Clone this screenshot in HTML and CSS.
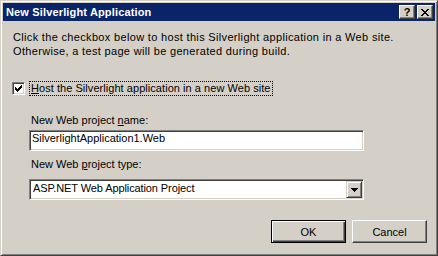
FILE: index.html
```html
<!DOCTYPE html>
<html lang="en">
<head>
  <meta charset="UTF-8" />
  <title>New Silverlight Application</title>
  <link rel="stylesheet" href="styles.css">
</head>
<body>

<div class="ventana">
  <div class="barra_titulo">
    <span class="titulo">New Silverlight Application</span>
    <div class="botones_titulo">
      <span class="boton_titulo ayuda">?</span>
      <span class="boton_titulo">
        <svg width="8" height="7" viewBox="0 0 8 7" shape-rendering="crispEdges">
          <rect x="0" y="0" width="2" height="1"/><rect x="6" y="0" width="2" height="1"/>
          <rect x="1" y="1" width="2" height="1"/><rect x="5" y="1" width="2" height="1"/>
          <rect x="2" y="2" width="4" height="1"/>
          <rect x="3" y="3" width="2" height="1"/>
          <rect x="2" y="4" width="4" height="1"/>
          <rect x="1" y="5" width="2" height="1"/><rect x="5" y="5" width="2" height="1"/>
          <rect x="0" y="6" width="2" height="1"/><rect x="6" y="6" width="2" height="1"/>
        </svg>
      </span>
    </div>
  </div>

  <div class="contenido">
    <p class="intro">Click the checkbox below to host this Silverlight application in a Web site.<br>Otherwise, a test page will be generated during build.</p>

    <label class="fila_check">
      <span class="casilla">
        <svg width="7" height="7" viewBox="0 0 7 7" shape-rendering="crispEdges">
          <rect x="6" y="0" width="1" height="1"/>
          <rect x="5" y="1" width="2" height="1"/>
          <rect x="0" y="2" width="1" height="1"/><rect x="4" y="2" width="3" height="1"/>
          <rect x="0" y="3" width="2" height="1"/><rect x="3" y="3" width="3" height="1"/>
          <rect x="0" y="4" width="5" height="1"/>
          <rect x="1" y="5" width="3" height="1"/>
          <rect x="2" y="6" width="1" height="1"/>
        </svg>
      </span>
      <span class="foco"><u>H</u>ost the Silverlight application in a new Web site</span>
    </label>

    <div class="campo">
      <div class="etiqueta">New Web project <u>n</u>ame:</div>
      <div class="caja_texto">SilverlightApplication1.Web</div>
    </div>

    <div class="campo campo_tipo">
      <div class="etiqueta">New Web <u>p</u>roject type:</div>
      <div class="combo">
        <span class="combo_valor">ASP.NET Web Application Project</span>
        <span class="combo_boton">
          <svg width="7" height="4" viewBox="0 0 7 4" shape-rendering="crispEdges">
            <rect x="0" y="0" width="7" height="1"/>
            <rect x="1" y="1" width="5" height="1"/>
            <rect x="2" y="2" width="3" height="1"/>
            <rect x="3" y="3" width="1" height="1"/>
          </svg>
        </span>
      </div>
    </div>

    <div class="botonera">
      <button class="boton por_defecto">OK</button>
      <button class="boton">Cancel</button>
    </div>
  </div>
</div>

</body>
</html>
```

FILE: styles.css
```css
html, body {
  margin: 0;
  padding: 0;
  background: #d4d0c8;
}

.ventana {
  width: 438px;
  height: 256px;
  box-sizing: border-box;
  background: #d4d0c8;
  border: 1px solid;
  border-color: #d4d0c8 #404040 #404040 #d4d0c8;
  box-shadow: inset 1px 1px #ffffff, inset -1px -1px #808080;
  padding: 2px;
  display: flex;
  flex-direction: column;
  font-family: 'Liberation Sans', Arial, sans-serif;
  font-size: 11px;
  line-height: 13px;
  color: #000;
}

.barra_titulo {
  height: 18px;
  background: #0a246a;
  display: flex;
  align-items: center;
  justify-content: space-between;
  padding: 0 2px 0 3px;
}

.titulo {
  color: #fff;
  font-weight: bold;
  font-size: 11px;
  letter-spacing: 0.15px;
}

.botones_titulo {
  display: flex;
  gap: 2px;
}

.boton_titulo {
  width: 16px;
  height: 14px;
  box-sizing: border-box;
  background: #d4d0c8;
  border: 1px solid;
  border-color: #ffffff #404040 #404040 #ffffff;
  box-shadow: inset -1px -1px #808080;
  display: flex;
  align-items: center;
  justify-content: center;
}

.ayuda {
  font-weight: bold;
  font-size: 11px;
  line-height: 12px;
}

.contenido {
  flex: 1;
  padding: 9px 8px 0 10px;
  display: flex;
  flex-direction: column;
}

.intro {
  margin: 0;
  line-height: 14px;
  letter-spacing: 0.33px;
}

.fila_check {
  display: flex;
  align-items: center;
  margin: 23px 0 0 -1px;
  gap: 4px;
}

.casilla {
  width: 13px;
  height: 13px;
  box-sizing: border-box;
  background: #fff;
  border: 1px solid;
  border-color: #808080 #ffffff #ffffff #808080;
  box-shadow: inset 1px 1px #404040, inset -1px -1px #d4d0c8;
  display: flex;
  align-items: center;
  justify-content: center;
}

.foco {
  border: 1px dotted #000;
  padding: 0 1px;
  line-height: 13px;
  letter-spacing: 0.05px;
}

.campo {
  margin: 18px 0 0 16px;
  width: 335px;
}

.campo_tipo {
  margin-top: 7px;
}

.etiqueta {
  padding-left: 2px;
  margin-bottom: 3px;
}

.campo_tipo .etiqueta {
  margin-bottom: 8px;
}

.caja_texto,
.combo {
  height: 21px;
  box-sizing: border-box;
  background: #fff;
  border: 1px solid;
  border-color: #808080 #ffffff #ffffff #808080;
  box-shadow: inset 1px 1px #404040, inset -1px -1px #d4d0c8;
  padding: 1px 2px 0;
}

.combo {
  display: flex;
  justify-content: space-between;
  padding: 1px 1px 1px 3px;
}

.combo_valor {
  padding-top: 1px;
  letter-spacing: -0.1px;
}

.combo_boton {
  width: 16px;
  height: 17px;
  box-sizing: border-box;
  background: #d4d0c8;
  border: 1px solid;
  border-color: #d4d0c8 #404040 #404040 #d4d0c8;
  box-shadow: inset 1px 1px #ffffff, inset -1px -1px #808080;
  display: flex;
  align-items: center;
  justify-content: center;
}

.botonera {
  display: flex;
  justify-content: flex-end;
  gap: 6px;
  margin-top: 20px;
}

.boton {
  width: 75px;
  height: 23px;
  box-sizing: border-box;
  background: #d4d0c8;
  border: 1px solid;
  border-color: #ffffff #404040 #404040 #ffffff;
  box-shadow: inset -1px -1px #808080, inset 1px 1px #d4d0c8;
  font-family: 'Liberation Sans', Arial, sans-serif;
  font-size: 11px;
  color: #000;
  padding: 0;
}

.por_defecto {
  border: 1px solid #000;
  box-shadow: inset 1px 1px #ffffff, inset -1px -1px #404040, inset -2px -2px #808080;
}
```
